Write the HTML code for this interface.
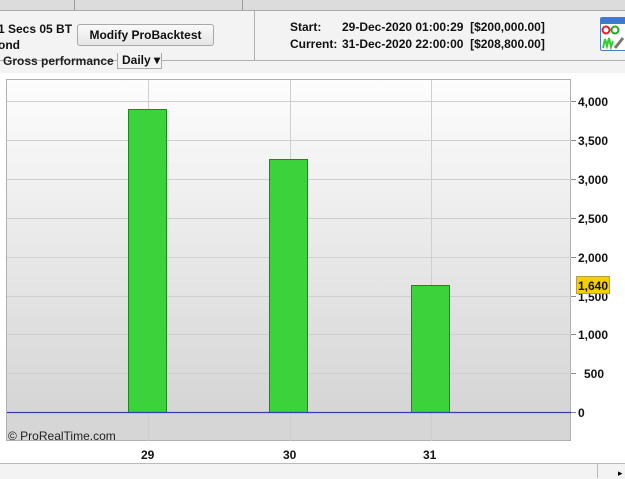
<!DOCTYPE html><html><head><style>
body{margin:0;width:625px;height:478px;overflow:hidden;background:#fff;font-family:"Liberation Sans",Arial,sans-serif;position:relative}
.a{position:absolute}
.b{font-weight:bold;font-size:12px;color:#111}
</style></head><body>
<div class="a" style="left:0;top:0;width:625px;height:10px;background:#dcdcdc;border-bottom:1px solid #aaa"></div>
<div class="a" style="left:74px;top:0;width:1px;height:10px;background:#999"></div>
<div class="a" style="left:242px;top:0;width:1px;height:10px;background:#999"></div>
<div class="a" style="left:0;top:11px;width:625px;height:49px;background:#f3f3f3;border-bottom:1px solid #b0b0b0"></div>
<div class="a" style="left:254px;top:11px;width:1px;height:49px;background:#b0b0b0"></div>
<div class="a b" style="left:-2px;top:21px;line-height:16px">1 Secs 05 BT<br>ond</div>
<div class="a b" style="left:77px;top:24px;width:135px;height:20px;border:1px solid #a8a8a8;border-radius:3px;background:linear-gradient(#fafafa,#e6e6e6);text-align:center;line-height:20px">Modify ProBacktest</div>
<div class="a b" style="left:290px;top:19px;line-height:17px">Start:<br>Current:</div>
<div class="a b" style="left:342px;top:19px;line-height:17px;white-space:pre">29-Dec-2020 01:00:29  [$200,000.00]
31-Dec-2020 22:00:00  [$208,800.00]</div>
<div class="a" style="left:600px;top:17px;width:25px;height:32px;background:#fff;border:1px solid #4a7ac8;border-radius:2px;overflow:hidden">
<div style="height:6px;background:#3f78d0"></div>
<svg width="25" height="26"><circle cx="5" cy="6" r="3.5" fill="none" stroke="#d22" stroke-width="2"/><circle cx="14" cy="6" r="3.5" fill="none" stroke="#2a2" stroke-width="2"/><path d="M2 24 L4 15 L6 22 L8 14 L10 23 L12 17" stroke="#3c3" fill="none" stroke-width="2"/><path d="M14 24 L22 14" stroke="#777" stroke-width="3"/></svg></div>
<div class="a" style="left:0;top:61px;width:625px;height:12px;background:#f3f3f3"></div>
<div class="a b" style="left:3px;top:54px;font-size:12px;color:#222">Gross performance</div>
<div class="a b" style="left:117px;top:53px;width:45px;height:16px;border:1px solid #aaa;border-top:none;background:#f3f3f3;font-size:12px;padding-left:4px;box-sizing:border-box">Daily ▾</div>
<div class="a" style="left:6px;top:79px;width:565px;height:362px;border:1px solid #b0b0b0;box-sizing:border-box;background:linear-gradient(#fdfdfd,#d6d6d6 90%,#d6d6d6)"></div>
<svg class="a" style="left:0;top:0" width="625" height="478">
<g stroke="#cfcfcf" stroke-width="1">
<line x1="148.5" y1="80" x2="148.5" y2="441"/><line x1="290.5" y1="80" x2="290.5" y2="441"/><line x1="431.5" y1="80" x2="431.5" y2="441"/>
<line x1="7" y1="101.5" x2="571" y2="101.5"/><line x1="7" y1="140.5" x2="571" y2="140.5"/><line x1="7" y1="179.5" x2="571" y2="179.5"/><line x1="7" y1="218.5" x2="571" y2="218.5"/><line x1="7" y1="257.5" x2="571" y2="257.5"/><line x1="7" y1="296.5" x2="571" y2="296.5"/><line x1="7" y1="334.5" x2="571" y2="334.5"/><line x1="7" y1="373.5" x2="571" y2="373.5"/>
</g>
<g stroke="#888"><line x1="571" y1="101.5" x2="576" y2="101.5"/><line x1="571" y1="140.5" x2="576" y2="140.5"/><line x1="571" y1="179.5" x2="576" y2="179.5"/><line x1="571" y1="218.5" x2="576" y2="218.5"/><line x1="571" y1="257.5" x2="576" y2="257.5"/><line x1="571" y1="296.5" x2="576" y2="296.5"/><line x1="571" y1="334.5" x2="576" y2="334.5"/><line x1="571" y1="373.5" x2="576" y2="373.5"/><line x1="571" y1="412.5" x2="576" y2="412.5"/></g>
<g fill="#3bd23b" stroke="#1a8a1a"><rect x="128.5" y="109.5" width="38" height="303"/><rect x="269.5" y="159.5" width="38" height="253"/><rect x="411.5" y="285.5" width="38" height="127"/></g>
<line x1="7" y1="412.5" x2="571" y2="412.5" stroke="#3040b0" stroke-width="1.2"/>
<g font-family="Liberation Sans" font-weight="bold" font-size="12" fill="#111">
<text x="578" y="106">4,000</text><text x="578" y="145">3,500</text><text x="578" y="184">3,000</text><text x="578" y="223">2,500</text><text x="578" y="262">2,000</text><text x="578" y="301">1,500</text><text x="578" y="339">1,000</text><text x="584" y="378">500</text><text x="578" y="417">0</text>
<text x="141" y="459">29</text><text x="283" y="459">30</text><text x="423" y="459">31</text>
</g>
<rect x="576.5" y="276.5" width="33" height="17" fill="#f5d000" stroke="#b8a040"/>
<text x="578" y="290" font-family="Liberation Sans" font-weight="bold" font-size="12" fill="#111">1,640</text>
<text x="8" y="440" font-family="Liberation Sans" font-size="12" fill="#222">© ProRealTime.com</text>
</svg>
<div class="a" style="left:0;top:463px;width:625px;height:15px;background:#f3f3f3;border-top:1px solid #bbb"></div>
<div class="a" style="left:597px;top:464px;width:1px;height:14px;background:#bbb"></div>
<div class="a" style="left:618px;top:468px;font-size:9px">▸</div>
</body></html>
